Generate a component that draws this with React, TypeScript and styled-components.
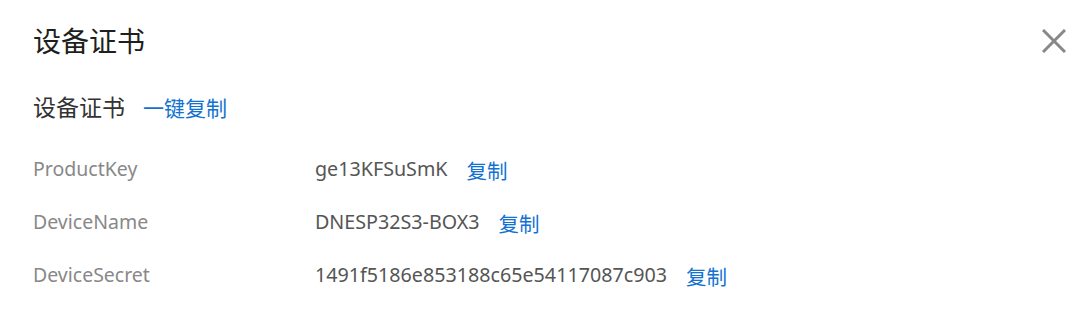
import React from "react";
import styled, { createGlobalStyle } from "styled-components";

const Global = createGlobalStyle`
  html, body { margin: 0; padding: 0; background: #fff; }
  body { font-family: "Noto Sans", "Noto Sans CJK SC", sans-serif; }
`;

const Panel = styled.div`
  width: 1086px;
  height: 320px;
  box-sizing: border-box;
  padding: 22px 20px 0 33px;
  background: #fff;
`;

const Header = styled.div`
  display: flex;
  align-items: center;
  justify-content: space-between;
  height: 38px;
`;

const Title = styled.h1`
  margin: 0;
  font-size: 28px;
  font-weight: 400;
  color: #1f1f1f;
  line-height: 36px;
`;

const CloseButton = styled.button`
  border: 0;
  background: none;
  padding: 0;
  display: flex;
  cursor: pointer;
`;

const Section = styled.div`
  display: flex;
  align-items: baseline;
  gap: 18px;
  margin-top: 32px;
`;

const SectionTitle = styled.h2`
  margin: 0;
  font-size: 23px;
  font-weight: 400;
  color: #333;
  line-height: 30px;
`;

const Link = styled.a`
  color: #1272d1;
  font-size: 21px;
  text-decoration: none;
  cursor: pointer;
`;

const Rows = styled.div`
  margin-top: 33px;
  display: flex;
  flex-direction: column;
  gap: 26px;
`;

const Row = styled.div`
  display: grid;
  grid-template-columns: 282px auto;
  align-items: baseline;
  line-height: 27px;
`;

const Label = styled.span`
  font-size: 19.5px;
  color: #888;
`;

const Value = styled.span`
  display: flex;
  align-items: baseline;
  gap: 19px;
  font-size: 19.7px;
  color: #555;
`;

const CopyLink = styled(Link)`
  font-size: 20.5px;
  position: relative;
  top: 3px;
`;

const rows = [
  ["ProductKey", "ge13KFSuSmK"],
  ["DeviceName", "DNESP32S3-BOX3"],
  ["DeviceSecret", "1491f5186e853188c65e54117087c903"],
];

export default function App() {
  return (
    <>
      <Global />
      <Panel>
        <Header>
          <Title>设备证书</Title>
          <CloseButton aria-label="close">
            <svg width="24" height="24" viewBox="0 0 24 24">
              <path d="M1 1 L23 23 M23 1 L1 23" stroke="#888" strokeWidth="3" />
            </svg>
          </CloseButton>
        </Header>
        <Section>
          <SectionTitle>设备证书</SectionTitle>
          <Link>一键复制</Link>
        </Section>
        <Rows>
          {rows.map(([k, v]) => (
            <Row key={k}>
              <Label>{k}</Label>
              <Value>
                {v}
                <CopyLink>复制</CopyLink>
              </Value>
            </Row>
          ))}
        </Rows>
      </Panel>
    </>
  );
}
